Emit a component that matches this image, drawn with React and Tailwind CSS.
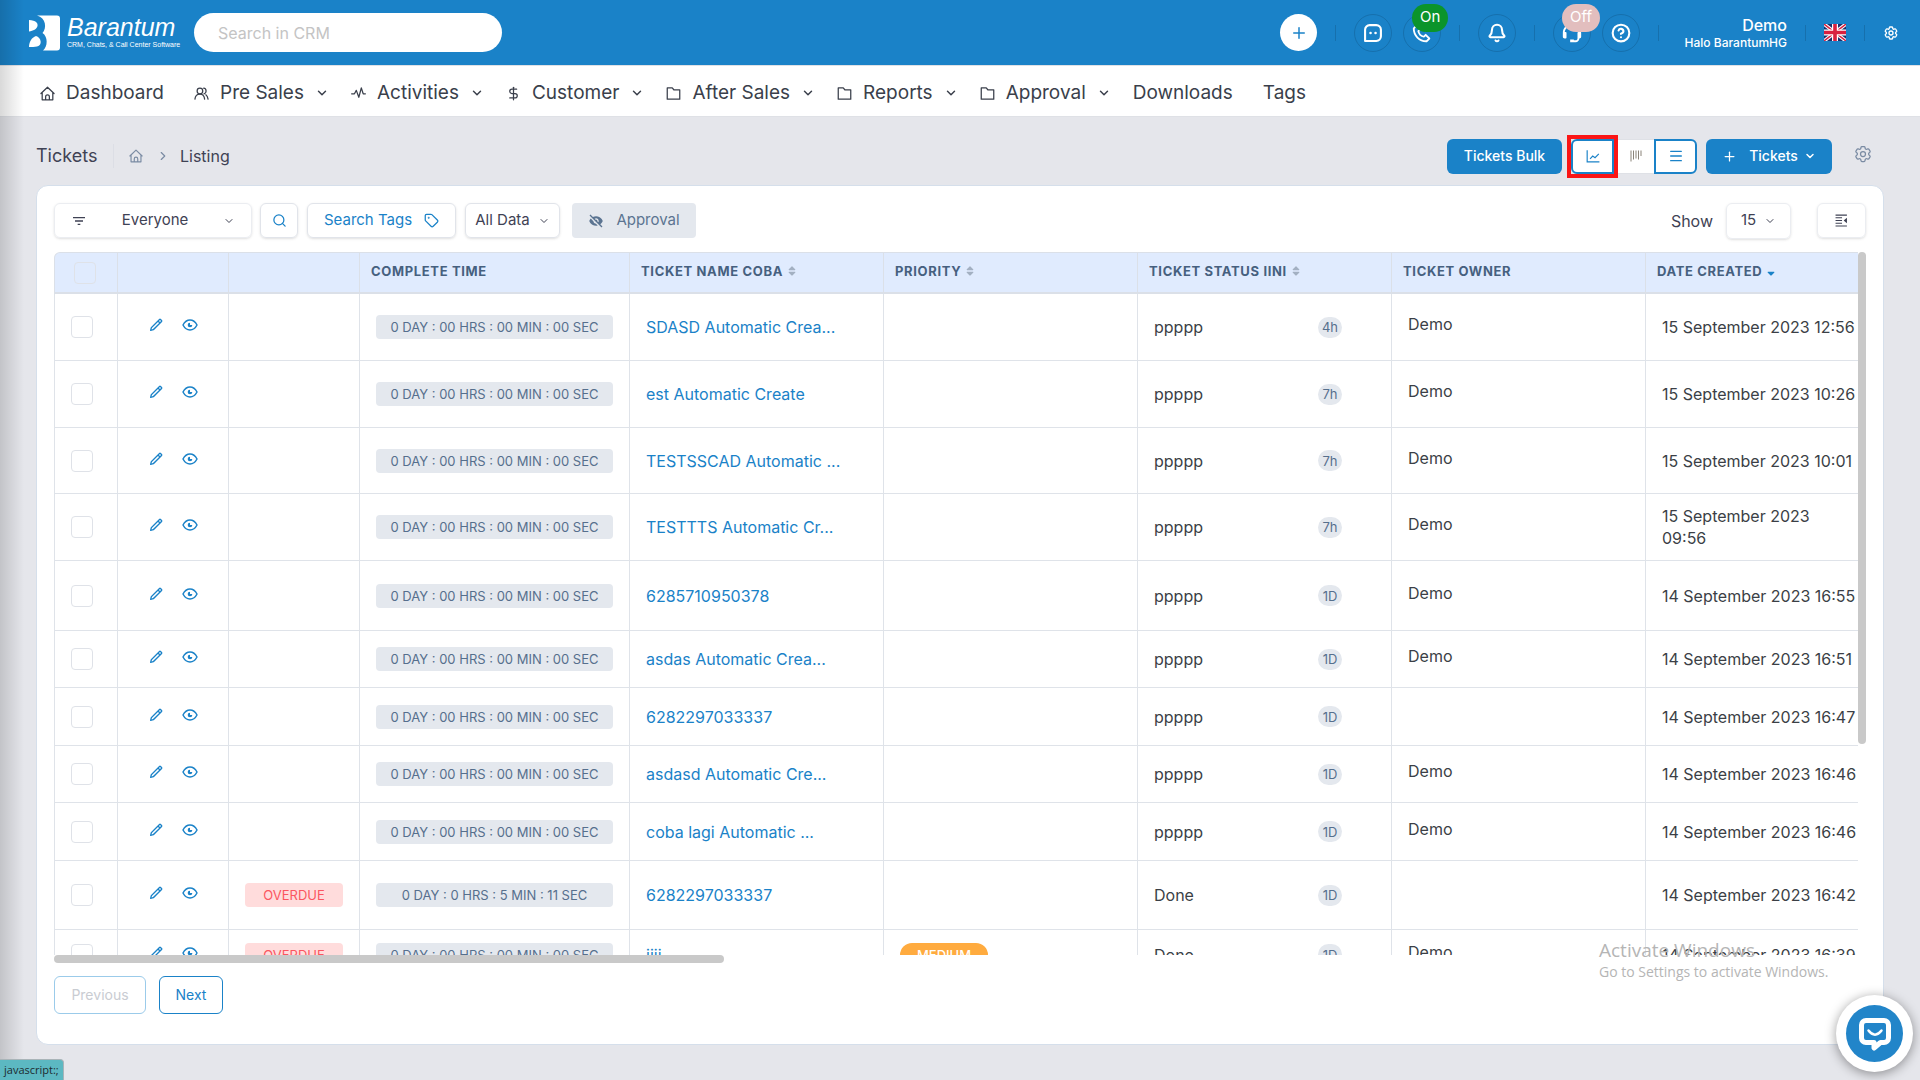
import { Bell, ChevronDown, ChevronRight, CircleQuestionMark, DollarSign, Menu, Plus, Search, Tag } from 'lucide-react';
import { BiPencil, BiPhoneCall, BiSolidHide, BiSupport } from 'react-icons/bi';
import { FaSort, FaSortDown } from 'react-icons/fa';
import { HiOutlineCog6Tooth } from 'react-icons/hi2';
import { MdFilterList } from 'react-icons/md';

const HomeIcon = ({ className }) => (
  <svg viewBox="0 0 24 24" fill="none" stroke="currentColor" strokeWidth="2" strokeLinejoin="round" strokeLinecap="round" className={className}>
    <path d="M1.500 12 12 2l10.500 10M3.500 10.500V22h17V10.500M9 22v-5a3 3 0 0 1 6 0v5" />
  </svg>
);

const PeopleIcon = ({ className }) => (
  <svg viewBox="0 0 24 24" fill="none" stroke="currentColor" strokeWidth="2" strokeLinecap="round" className={className}>
    <circle cx="9.500" cy="8" r="4.500" />
    <path d="M1.500 21c.5-5 3.500-8 8-8s7 3 7.500 8M15.500 3.500c5 .5 5 8 .5 9M19 14c2 1.500 3 4 3.500 7" />
  </svg>
);

const PulseIcon = ({ className }) => (
  <svg viewBox="0 0 24 24" fill="none" stroke="currentColor" strokeWidth="2" strokeLinejoin="round" strokeLinecap="round" className={className}>
    <path d="M1 12.500h4.500L8.500 7l4 11 4-15 3 9.500H23" />
  </svg>
);

const FolderIcon = ({ className }) => (
  <svg viewBox="0 0 24 24" fill="none" stroke="currentColor" strokeWidth="2" strokeLinejoin="round" className={className}>
    <path d="M2 3h8l2.500 3H22v15H2z" />
  </svg>
);

const ChatIcon = ({ className }) => (
  <svg viewBox="0 0 24 24" fill="none" stroke="currentColor" strokeWidth="2.500" strokeLinejoin="round" strokeLinecap="round" className={className}>
    <path d="M2.500 21.500V8A5.500 5.500 0 0 1 8 2.500h8A5.500 5.500 0 0 1 21.500 8v8a5.500 5.500 0 0 1-5.500 5.500z" />
    <path d="M9 12h.1M15 12h.1" strokeWidth="3" />
  </svg>
);

const ChartIcon = ({ className }) => (
  <svg viewBox="0 0 24 24" fill="none" stroke="currentColor" strokeWidth="2" className={className}>
    <path d="M2 2v20h21M7 17l4.500-5 4 3 6.500-6.500" />
  </svg>
);

const KanbanIcon = ({ className }) => (
  <svg viewBox="0 0 24 24" fill="none" stroke="currentColor" strokeWidth="2" className={className}>
    <path d="M2 1v22M7 1v18M12 1v16M17 1v18M22 1v11" />
  </svg>
);

const EyeIcon = ({ className }) => (
  <svg viewBox="0 0 24 24" fill="none" stroke="currentColor" strokeWidth="2.200" className={className}>
    <path d="M1.500 12C4 7.200 7.600 4.500 12 4.500s8 2.700 10.500 7.500c-2.500 4.800-6.100 7.500-10.500 7.500S4 16.800 1.500 12z" />
    <path d="M12 8.500a3.500 3.500 0 1 0 3.500 3.500L12 12z" fill="currentColor" stroke="none" />
  </svg>
);

const ColumnsIcon = ({ className }) => (
  <svg viewBox="0 0 24 24" fill="none" stroke="currentColor" strokeWidth="2" className={className}>
    <path d="M1 2h21M1 7h12M1 12h12M1 17h12M1 22h21" />
    <path d="m22 7-6 5 6 5z" fill="currentColor" stroke="none" />
  </svg>
);

const FlagIcon = ({ className }) => (
  <svg viewBox="0 0 22 17" className={className}>
    <path fill="#1b2f6b" d="M0 0h22v17H0z" />
    <path stroke="#fff" strokeWidth="3.600" d="m0 0 22 17M22 0 0 17" />
    <path stroke="#d8203f" strokeWidth="1.400" d="m0 0 22 17M22 0 0 17" />
    <path stroke="#fff" strokeWidth="6" d="M11 0v17M0 8.500h22" />
    <path stroke="#d8203f" strokeWidth="3.600" d="M11 0v17M0 8.500h22" />
  </svg>
);

const navItems = [
  { label: 'Dashboard', icon: HomeIcon },
  { label: 'Pre Sales', icon: PeopleIcon, menu: true },
  { label: 'Activities', icon: PulseIcon, menu: true },
  { label: 'Customer', icon: DollarSign, menu: true },
  { label: 'After Sales', icon: FolderIcon, menu: true },
  { label: 'Reports', icon: FolderIcon, menu: true },
  { label: 'Approval', icon: FolderIcon, menu: true },
  { label: 'Downloads' },
  { label: 'Tags' }
];

const columns = [
  { label: 'Complete Time' },
  { label: 'Ticket Name Coba', sort: 'both' },
  { label: 'Priority', sort: 'both' },
  { label: 'Ticket Status Iini', sort: 'both' },
  { label: 'Ticket Owner' },
  { label: 'Date Created', sort: 'down' }
];

const NO_TIME = '0 DAY : 00 HRS : 00 MIN : 00 SEC';

const tickets = [
  { name: 'SDASD Automatic Crea...', status: 'ppppp', age: '4h', owner: 'Demo', created: '15 September 2023 12:56', height: 'h-[67px]' },
  { name: 'est Automatic Create', status: 'ppppp', age: '7h', owner: 'Demo', created: '15 September 2023 10:26', height: 'h-[67px]' },
  { name: 'TESTSSCAD Automatic ...', status: 'ppppp', age: '7h', owner: 'Demo', created: '15 September 2023 10:01', height: 'h-[66px]' },
  { name: 'TESTTTS Automatic Cr...', status: 'ppppp', age: '7h', owner: 'Demo', created: '15 September 2023\n09:56', height: 'h-[67px]' },
  { name: '6285710950378', status: 'ppppp', age: '1D', owner: 'Demo', created: '14 September 2023 16:55', height: 'h-[70px]' },
  { name: 'asdas Automatic Crea...', status: 'ppppp', age: '1D', owner: 'Demo', created: '14 September 2023 16:51', height: 'h-[57px]' },
  { name: '6282297033337', status: 'ppppp', age: '1D', created: '14 September 2023 16:47', height: 'h-[58px]' },
  { name: 'asdasd Automatic Cre...', status: 'ppppp', age: '1D', owner: 'Demo', created: '14 September 2023 16:46', height: 'h-[57px]' },
  { name: 'coba lagi Automatic ...', status: 'ppppp', age: '1D', owner: 'Demo', created: '14 September 2023 16:46', height: 'h-[58px]' },
  { name: '6282297033337', status: 'Done', age: '1D', created: '14 September 2023 16:42', overdue: true, time: '0 DAY : 0 HRS : 5 MIN : 11 SEC', height: 'h-[69px]' },
  { name: 'jjjj', status: 'Done', age: '1D', owner: 'Demo', created: '14 September 2023 16:39', overdue: true, priority: 'MEDIUM', height: 'h-[50px]' }
];

const checkboxClass = 'block size-[22px] appearance-none rounded border border-[#dfe2e8] checked:bg-[#1a82c8]';

const Divider = () => <span className="h-4 w-px bg-[#1670ad]" />;

const RoundButton = ({ label, badge, badgeClass, children }) => (
  <button type="button" aria-label={label} className="relative flex size-[38px] items-center justify-center rounded-full border border-[#1670ad] text-white">
    {children}
    {badge && (
      <span className={`absolute -top-[11px] left-2 flex h-7 items-center rounded-[14px] px-2 text-[15px] ${badgeClass}`}>{badge}</span>
    )}
  </button>
);

function TopBar() {
  return (
    <header className="flex h-[65px] shrink-0 items-center bg-[#1a82c8] pl-7 pr-[21px] text-white">
      <a href="#" className="flex w-[166px] items-center gap-[7px]">
        <svg viewBox="0 0 32 36" className="h-9 w-8" fill="#fff">
          <path d="M1 5c7 .5 9 3 8.500 6C9 14 5 16 1 16.500z" />
          <path d="M8 21c5 1.500 7 9 1 10.500-2.500.5-5 .5-8 .5 0-5 2.500-9.500 7-11z" />
          <path d="M9 .5h20a3 3 0 0 1 3 3v29a3 3 0 0 1-3 3H15c5-4 5-14-.5-17.500C19 13 18 3 9 .5z" />
        </svg>
        <span className="flex flex-col whitespace-nowrap font-['Liberation_Sans',sans-serif]">
          <span className="text-[25px] leading-6 italic">Barantum</span>
          <span className="text-[7px] leading-3">CRM, Chats, &amp; Call Center Software</span>
        </span>
      </a>
      <input
        type="text"
        aria-label="Search in CRM"
        placeholder="Search in CRM"
        className="h-[39px] w-[308px] rounded-full bg-white px-6 text-base text-gray-700 placeholder:text-[#c4c4c4]"
      />
      <div className="ml-auto flex items-center gap-[18px]">
        <button type="button" aria-label="Add" className="flex size-[37px] items-center justify-center rounded-full bg-white text-[#1a82c8]">
          <Plus className="size-[18px]" />
        </button>
        <Divider />
        <div className="flex gap-[11px]">
          <RoundButton label="Chats"><ChatIcon className="size-5" /></RoundButton>
          <RoundButton label="Calls" badge="On" badgeClass="bg-[#0b942b]"><BiPhoneCall className="size-[22px]" /></RoundButton>
        </div>
        <Divider />
        <RoundButton label="Notifications"><Bell className="size-5" strokeWidth={2.5} /></RoundButton>
        <Divider />
        <div className="flex gap-[11px]">
          <RoundButton label="Support" badge="Off" badgeClass="bg-[#e2bebe]"><BiSupport className="size-[22px]" /></RoundButton>
          <RoundButton label="Help"><CircleQuestionMark className="size-5" strokeWidth={2.5} /></RoundButton>
        </div>
        <Divider />
        <div className="flex w-[110px] flex-col items-end whitespace-nowrap">
          <span className="text-base leading-5 font-medium">Demo</span>
          <span className="text-xs leading-4 font-medium">Halo BarantumHG</span>
        </div>
        <Divider />
        <FlagIcon className="h-[17px] w-[22px]" />
        <Divider />
        <button type="button" aria-label="Settings"><HiOutlineCog6Tooth className="size-4" strokeWidth={2} /></button>
      </div>
    </header>
  );
}

function NavBar() {
  return (
    <nav className="flex h-[52px] shrink-0 items-center gap-[22px] border-y border-[#dfe1e6] bg-white pt-1 pl-10 text-[#3a3f4b]">
      {navItems.map(({ label, icon: Icon, menu }) => (
        <a key={label} href="#" className={`flex items-center gap-[11px] text-[19px] whitespace-nowrap ${menu ? '' : 'mr-2'}`}>
          {Icon && <Icon className="size-[15px]" />}
          {label}
          {menu && <ChevronDown className="size-[14px]" strokeWidth={2.5} />}
        </a>
      ))}
    </nav>
  );
}

function PageHeader() {
  return (
    <div className="flex h-[68px] shrink-0 items-center pt-[10px] pr-[47px] pl-9 text-[#3f4254]">
      <h1 className="w-[78px] border-r border-[#dcdee5] text-lg leading-6">Tickets</h1>
      <HomeIcon className="ml-[15px] size-[14px] text-[#7a8ba3]" />
      <ChevronRight className="ml-[13px] size-[14px] text-[#7a8ba3]" />
      <span className="ml-2.5 text-base">Listing</span>

      <div className="ml-auto flex items-center gap-[5px]">
        <button type="button" className="h-[35px] w-[115px] rounded-md bg-[#1a82c8] text-sm font-medium text-white">Tickets Bulk</button>
        <div className="flex items-center">
          <div className="border-4 border-[#fb1515]">
            <button type="button" aria-label="Chart view" className="flex h-[35px] w-[43px] items-center justify-center rounded-l-md border-2 border-[#1a82c8] bg-white text-[#1a82c8]">
              <ChartIcon className="size-[14px]" />
            </button>
          </div>
          <button type="button" aria-label="Board view" className="flex h-[35px] w-9 items-center justify-center border-y border-[#dfe1e6] bg-white text-[#8a8378]">
            <KanbanIcon className="size-3" />
          </button>
          <button type="button" aria-label="List view" className="flex h-[35px] w-[43px] items-center justify-center rounded-r-md border-2 border-[#1a82c8] bg-white text-[#1a82c8]">
            <Menu className="size-4" />
          </button>
        </div>
        <button type="button" className="ml-1 flex h-[35px] w-[126px] items-center justify-center gap-3 rounded-md bg-[#1a82c8] text-sm font-medium text-white">
          <Plus className="size-[15px]" />
          <span className="flex items-center gap-1.5">Tickets <ChevronDown className="size-3" strokeWidth={3} /></span>
        </button>
        <button type="button" aria-label="Page settings" className="ml-4 pb-1 text-[#7a8ba3]"><HiOutlineCog6Tooth className="size-5" /></button>
      </div>
    </div>
  );
}

function Toolbar() {
  return (
    <div className="flex h-[35px] shrink-0 items-center text-[15px] text-[#3f4254]">
      <button type="button" className="flex h-[35px] w-[198px] items-center justify-between rounded-md border border-[#ebedf1] px-4 shadow-sm">
        <MdFilterList className="size-4" />
        Everyone
        <ChevronDown className="size-3" />
      </button>
      <button type="button" aria-label="Search" className="ml-2 flex h-[35px] w-[38px] items-center justify-center rounded-md border border-[#e1e4ea] text-[#1a82c8] shadow-sm">
        <Search className="size-[15px]" />
      </button>
      <button type="button" className="ml-[9px] flex h-[35px] w-[149px] items-center justify-center gap-3 rounded-md border border-[#e1e4ea] text-[#1a82c8] shadow-sm">
        Search Tags <Tag className="size-[15px]" />
      </button>
      <button type="button" className="ml-[9px] flex h-[35px] w-[95px] items-center justify-center gap-2 rounded-md border border-[#e1e4ea] shadow-sm">
        All Data <ChevronDown className="size-3" />
      </button>
      <button type="button" className="ml-3 flex h-[35px] w-[124px] items-center justify-center gap-3 rounded bg-[#e4e8ee] text-[#5b7491]">
        <BiSolidHide className="size-4" /> Approval
      </button>
      <span className="ml-auto text-base">Show</span>
      <button type="button" className="ml-[13px] flex h-9 w-[65px] items-center justify-center gap-2 rounded-md border border-[#ebedf1] shadow-sm">
        15 <ChevronDown className="size-3" />
      </button>
      <button type="button" aria-label="Columns" className="ml-[26px] flex h-[35px] w-[49px] items-center justify-center rounded-md border border-[#ebedf1] shadow-sm">
        <ColumnsIcon className="size-[13px]" />
      </button>
    </div>
  );
}

function TicketRow({ ticket }) {
  return (
    <tr className={`${ticket.height} [&>td]:border-r [&>td]:border-b [&>td]:border-[#dfe3e9] [&>td]:px-4 [&>td]:py-0`}>
      <td className="border-l"><input type="checkbox" aria-label={`Select ${ticket.name}`} className={checkboxClass} /></td>
      <td>
        <div className="flex justify-center gap-[18px] pb-1 text-[#1a82c8]">
          <button type="button" aria-label="Edit"><BiPencil className="size-4" /></button>
          <button type="button" aria-label="View"><EyeIcon className="size-4" /></button>
        </div>
      </td>
      <td>
        {ticket.overdue && <span className="flex h-6 items-center justify-center rounded bg-[#ffdcdc] text-[13px] text-[#fb5660]">OVERDUE</span>}
      </td>
      <td>
        <span className="flex h-6 items-center justify-center rounded bg-[#e4e8ee] text-[13px] whitespace-nowrap text-[#566f8d]">{ticket.time || NO_TIME}</span>
      </td>
      <td className="whitespace-nowrap"><a href="#" className="text-[#1a82c8]">{ticket.name}</a></td>
      <td>
        {ticket.priority && (
          <span className="flex h-6 w-[88px] items-center justify-center rounded-full bg-[#ffab3f] text-[13px] font-medium text-white">{ticket.priority}</span>
        )}
      </td>
      <td>
        <div className="flex items-center justify-between pr-[33px]">
          {ticket.status}
          <span className="flex h-[21px] min-w-6 items-center justify-center rounded-full bg-[#e4e8ee] px-1 text-[13px] text-[#566f8d]">{ticket.age}</span>
        </div>
      </td>
      <td><div className="pb-1.5">{ticket.owner}</div></td>
      <td className="whitespace-pre">{ticket.created}</td>
    </tr>
  );
}

function TicketTable() {
  return (
    <table className="w-[1850px] table-fixed border-separate border-spacing-0 text-base leading-[22px] text-[#3b3f46]">
      <colgroup>
        <col className="w-16" />
        <col className="w-[111px]" />
        <col className="w-[131px]" />
        <col className="w-[270px]" />
        <col className="w-[254px]" />
        <col className="w-[254px]" />
        <col className="w-[254px]" />
        <col className="w-[254px]" />
        <col />
      </colgroup>
      <thead>
        <tr className="h-[42px] text-left [&>th]:border-t [&>th]:border-r [&>th]:border-b-2 [&>th]:border-[#dbe0e8] [&>th]:bg-[#e0ebfe] [&>th]:py-0">
          <th className="rounded-tl-md border-l pl-[19px]">
            <input type="checkbox" aria-label="Select all" className={checkboxClass} />
          </th>
          <th />
          <th />
          {columns.map(({ label, sort }) => (
            <th key={label} className="px-[11px]">
              <span className="flex items-center gap-[3px] pb-1 text-[13px] font-bold tracking-wider whitespace-nowrap text-[#46607f] uppercase">
                {label}
                {sort === 'both' && <FaSort className="size-3 text-[#a3b0c2]" />}
                {sort === 'down' && <FaSortDown className="size-3 text-[#1a82c8]" />}
              </span>
            </th>
          ))}
        </tr>
      </thead>
      <tbody>
        {tickets.map((ticket) => <TicketRow key={ticket.created + ticket.name} ticket={ticket} />)}
      </tbody>
    </table>
  );
}

export default function App() {
  return (
    <div className="relative flex h-screen flex-col overflow-hidden bg-[#e5e6eb] font-['Inter',sans-serif]">
      <TopBar />
      <NavBar />
      <PageHeader />

      <main className="mx-9 mb-[35px] flex min-h-0 flex-1 flex-col rounded-xl border border-[#d5dfeb] bg-white px-[17px] pt-[17px] pb-[30px]">
        <Toolbar />
        <div className="mt-[14px] flex min-h-0 flex-1">
          <div className="min-w-0 flex-1 overflow-hidden">
            <TicketTable />
          </div>
          <div className="w-2 shrink-0">
            <div className="h-[70%] rounded-full bg-[#c9c9c9]" />
          </div>
        </div>
        <div className="h-2 shrink-0">
          <div className="h-2 w-[37%] rounded-full bg-[#c9c9c9]" />
        </div>
        <div className="mt-[13px] flex gap-[13px] text-sm">
          <button type="button" disabled className="h-[38px] w-[92px] rounded-md border border-[#9bcbea] text-[#c9ccd2]">Previous</button>
          <button type="button" className="h-[38px] w-16 rounded-md border border-[#1a82c8] text-[#1a82c8]">Next</button>
        </div>
      </main>

      <div className="pointer-events-none absolute inset-y-0 left-0 w-6 bg-gradient-to-r from-black/15 to-transparent" />

      <div className="pointer-events-none absolute right-[84px] bottom-[98px] w-[237px] font-['Open_Sans',sans-serif] whitespace-nowrap text-[#b5b5b5]">
        <p className="text-[19px] leading-6">Activate Windows</p>
        <p className="text-sm leading-5">Go to Settings to activate Windows.</p>
      </div>

      <button type="button" aria-label="Open chat" className="absolute right-[7px] bottom-2 flex size-[77px] items-center justify-center rounded-full bg-white shadow-[0_2px_12px_rgba(0,0,0,0.4)]">
        <span className="flex size-[57px] items-center justify-center rounded-full bg-[#2285c9] text-white">
          <svg viewBox="0 0 34 36" className="h-9 w-[34px]" fill="none" stroke="currentColor" strokeLinecap="round" strokeLinejoin="round">
            <path strokeWidth="5" d="M8 4.500h18A4.500 4.500 0 0 1 30.500 9v13a4.500 4.500 0 0 1-4.500 4.500h-3.500L16 32v-5.500H8A4.500 4.500 0 0 1 3.500 22V9A4.500 4.500 0 0 1 8 4.500z" />
            <path strokeWidth="2.500" d="M10.500 14.500c4 5.500 9 5.500 13 0" />
          </svg>
        </span>
      </button>

      <div className="absolute bottom-0 left-0 flex h-[21px] items-center rounded-tr-sm border-t border-r border-[#a9b4b8] bg-[#5cb8c2] px-1 font-['Open_Sans',sans-serif] text-[11px] text-[#1d2b30]">
        javascript:;
      </div>
    </div>
  );
}
